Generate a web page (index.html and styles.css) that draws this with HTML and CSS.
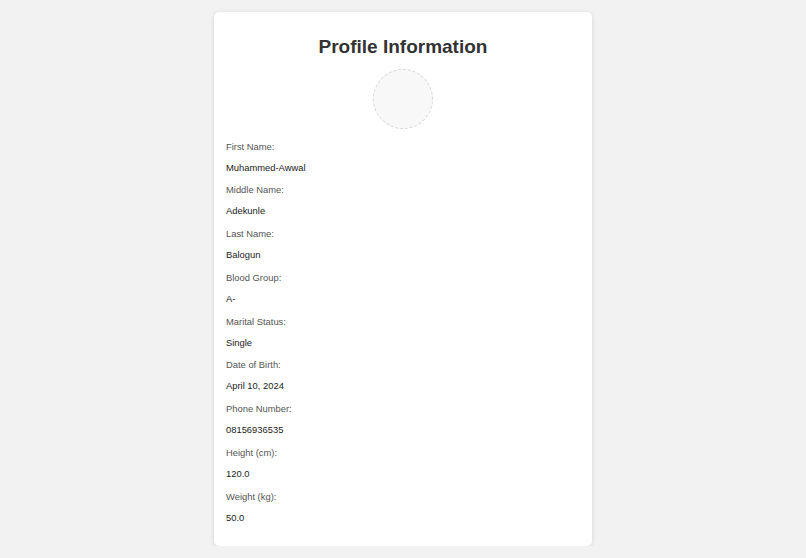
FILE: index.html
```
<!DOCTYPE html>
<html lang="en">
<head>
<meta charset="utf-8">
<title>Profile Information</title>
<link rel="stylesheet" href="styles.css">
</head>
<body>
<div class="card">
  <h1 class="title">Profile Information</h1>
  <div class="avatar"></div>
  <div class="field"><div class="label">First Name:</div><div class="value">Muhammed-Awwal</div></div>
  <div class="field"><div class="label">Middle Name:</div><div class="value">Adekunle</div></div>
  <div class="field"><div class="label">Last Name:</div><div class="value">Balogun</div></div>
  <div class="field"><div class="label">Blood Group:</div><div class="value">A-</div></div>
  <div class="field"><div class="label">Marital Status:</div><div class="value">Single</div></div>
  <div class="field"><div class="label">Date of Birth:</div><div class="value">April 10, 2024</div></div>
  <div class="field"><div class="label">Phone Number:</div><div class="value">08156936535</div></div>
  <div class="field"><div class="label">Height (cm):</div><div class="value">120.0</div></div>
  <div class="field"><div class="label">Weight (kg):</div><div class="value">50.0</div></div>
</div>
</body>
</html>
```
FILE: styles.css
```
html, body {
  margin: 0;
  padding: 0;
}
body {
  background: #f2f2f2;
  font-family: "Liberation Sans", Arial, sans-serif;
  padding-top: 12px;
}
.card {
  width: 354px;
  margin: 0 auto;
  background: #ffffff;
  border-radius: 5px;
  box-shadow: 0 1px 5px rgba(0, 0, 0, 0.12);
  padding: 12px 12px 12px 12px;
}
.title {
  margin: 12px 0 11px 0;
  font-size: 19px;
  line-height: 22px;
  font-weight: bold;
  color: #333333;
  text-align: center;
}
.avatar {
  width: 58px;
  height: 58px;
  margin: 0 auto 11.5px auto;
  border: 1px dashed #d6d6d6;
  border-radius: 50%;
  background: #f8f8f8;
}
.field {
  margin-bottom: 11.75px;
}
.field:last-child {
  margin-bottom: 11.5px;
}
.label {
  font-size: 9.4px;
  line-height: 11px;
  color: #555555;
  margin-bottom: 10px;
}
.value {
  font-size: 9.4px;
  line-height: 11px;
  color: #222222;
}
```
